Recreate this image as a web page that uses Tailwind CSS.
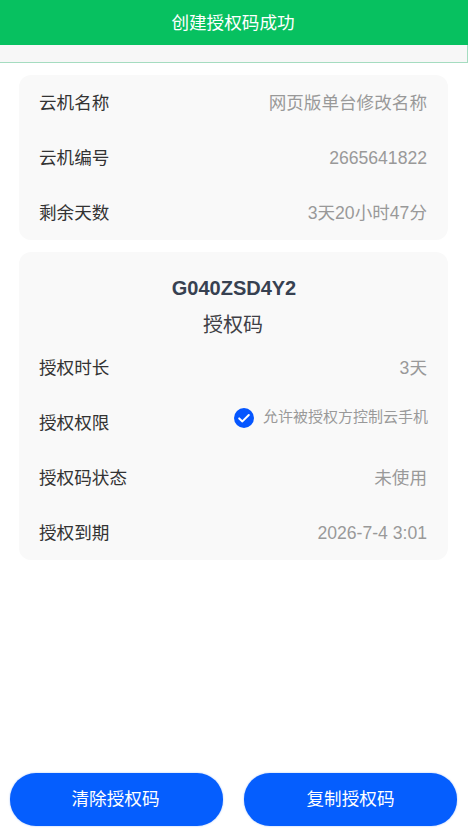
<!DOCTYPE html>
<html lang="zh">
<head>
  <meta charset="UTF-8" />
  <meta name="viewport" content="width=device-width, initial-scale=1.0"/>
  <title>授权码</title>
  <script src="https://cdn.jsdelivr.net/npm/@tailwindcss/browser@4"></script>
</head>
<body class="bg-white h-[834px] w-[468px] overflow-hidden flex flex-col font-['Liberation_Sans','Noto_Sans_CJK_SC',sans-serif]">
  <!-- toast + nav strip -->
  <div class="h-[45px] pt-[2px] pr-[2px] bg-[#07c160] text-white text-[17.6px] flex items-center justify-center">创建授权码成功</div>
  <div class="h-[18px] bg-[#f7f7f7] border-b border-r border-[#a5dcc0]"></div>

  <div class="pl-[19px] pr-[20px] pt-3 flex flex-col gap-3">
    <div class="bg-[#f9f9f9] rounded-xl pl-5 pr-[21px] text-[17.6px]">
      <div class="h-[55px] pt-[2px] flex items-center justify-between"><span class="text-[#333]">云机名称</span><span class="text-[#999]">网页版单台修改名称</span></div>
      <div class="h-[55px] pt-[2px] flex items-center justify-between"><span class="text-[#333]">云机编号</span><span class="text-[#999]">2665641822</span></div>
      <div class="h-[55px] pt-[2px] flex items-center justify-between"><span class="text-[#333]">剩余天数</span><span class="text-[#999]">3天20小时47分</span></div>
    </div>

    <div class="bg-[#f9f9f9] rounded-xl pl-5 pr-[21px] pt-[18px] text-[17.6px]">
      <div class="pl-[2px] text-center font-bold text-xl text-[#374151] leading-[36px]">G040ZSD4Y2</div>
      <div class="h-[34px] pt-[3px] flex items-center justify-center text-[20px] text-[#3f3f46]">授权码</div>
      <div class="h-[55px] pt-[2px] flex items-center justify-between"><span class="text-[#333]">授权时长</span><span class="text-[#999]">3天</span></div>
      <div class="h-[55px] pt-[2px] flex items-center justify-between">
        <span class="text-[#333]">授权权限</span>
        <span class="flex items-center gap-[9px] text-[#999] text-[15px] -mt-[12px] -mr-px">
          <svg class="w-5 h-5" viewBox="0 0 20 20"><circle cx="10" cy="10" r="10" fill="#0556ff"/><path d="M5.2 10.4l3.2 3 6.4-6.4" fill="none" stroke="#fff" stroke-width="2" stroke-linecap="round" stroke-linejoin="round"/></svg>
          允许被授权方控制云手机
        </span>
      </div>
      <div class="h-[55px] pt-[2px] flex items-center justify-between"><span class="text-[#333]">授权码状态</span><span class="text-[#999]">未使用</span></div>
      <div class="h-[55px] pt-[2px] flex items-center justify-between"><span class="text-[#333]">授权到期</span><span class="text-[#999]">2026-7-4 3:01</span></div>
    </div>
  </div>

  <div class="mt-auto pl-[10px] pb-[8px] flex gap-[21px]">
    <button class="w-[213px] h-[53px] pr-[2px] rounded-[26px] bg-[#055efe] shadow-[0_0_2px_#9dbdf8] text-white text-[17.6px]">清除授权码</button>
    <button class="w-[213px] h-[53px] rounded-[26px] bg-[#055efe] shadow-[0_0_2px_#9dbdf8] text-white text-[17.6px]">复制授权码</button>
  </div>
</body>
</html>
